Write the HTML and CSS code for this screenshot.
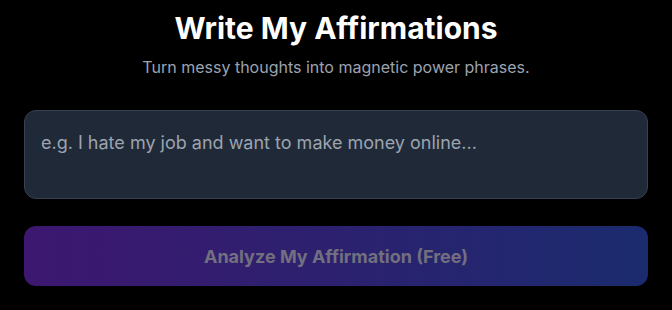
FILE: index.html
```html
<!DOCTYPE html>
<html lang="en">
<head>
    <meta charset="UTF-8">
    <meta name="viewport" content="width=device-width, initial-scale=1.0">
    <title>Write My Affirmations</title>
    <link rel="stylesheet" href="styles.css">
</head>
<body>
    <div class="container">
        <h1>Write My Affirmations</h1>
        <p class="subtitle">Turn messy thoughts into magnetic power phrases.</p>
        <textarea class="thoughts" placeholder="e.g. I hate my job and want to make money online..."></textarea>
        <button class="analyze" disabled>Analyze My Affirmation (Free)</button>
    </div>
</body>
</html>
```

FILE: styles.css
```css
body {
    margin: 0;
    background-color: #000;
    font-family: Inter, "Noto Sans", sans-serif;
}

.container {
    padding: 8px 24px 0;
    display: flex;
    flex-direction: column;
    text-align: center;
}

h1 {
    margin: 0;
    font-size: 30px;
    line-height: 40px;
    font-weight: 700;
    color: #fff;
}

.subtitle {
    margin: 7px 0 0;
    font-size: 16px;
    line-height: 24px;
    color: #9ca3af;
}

.thoughts {
    margin-top: 31px;
    height: 89px;
    box-sizing: border-box;
    padding: 18px 16px;
    resize: none;
    background-color: #1f2937;
    border: 1px solid #374151;
    border-radius: 12px;
    font-family: inherit;
    font-size: 18px;
    line-height: 28px;
    color: #fff;
}

.thoughts::placeholder {
    color: #9ca3af;
}

.analyze {
    margin-top: 27px;
    height: 60px;
    border: none;
    border-radius: 12px;
    background: linear-gradient(to right, #3d1770, #1b2b6e);
    font-family: inherit;
    font-size: 18px;
    font-weight: 700;
    color: #72707f;
}
```
